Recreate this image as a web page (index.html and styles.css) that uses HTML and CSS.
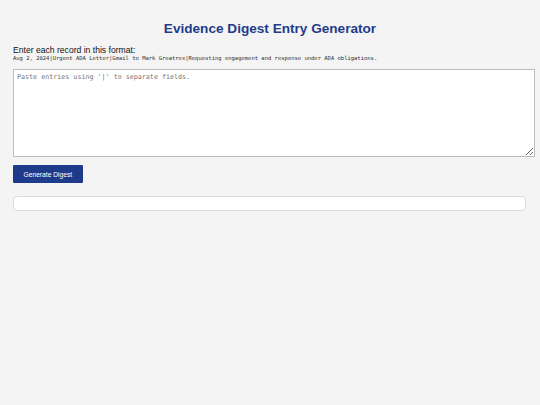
FILE: index.html
```html
<!DOCTYPE html>
<html lang="en">
<head>
<meta charset="utf-8">
<title>Evidence Digest Entry Generator</title>
<link rel="stylesheet" href="styles.css">
</head>
<body>
<h1 class="title">Evidence Digest Entry Generator</h1>
<div class="format">
  <div class="format-label">Enter each record in this format:</div>
  <code class="format-example">Aug 2, 2024|Urgent ADA Letter|Gmail to Mark Greatrex|Requesting engagement and response under ADA obligations.</code>
</div>
<textarea class="entries" placeholder="Paste entries using '|' to separate fields."></textarea>
<button class="generate" type="button">Generate Digest</button>
<div class="output"></div>
</body>
</html>
```

FILE: styles.css
```css
html, body {
  margin: 0;
  background: #f4f4f4;
}
body {
  padding: 13px;
  font-family: "Liberation Sans", Arial, sans-serif;
  color: #111;
}
.title {
  margin: 8px 0 8px;
  font-size: 13.6px;
  line-height: 16px;
  font-weight: bold;
  text-align: center;
  color: #1f3b8a;
}
.format-label {
  font-size: 8.6px;
  line-height: 10px;
  color: #111;
}
.format-example {
  display: block;
  font-family: "DejaVu Sans Mono", "Liberation Mono", monospace;
  font-size: 5.5px;
  line-height: 7px;
  color: #333;
}
.entries {
  display: block;
  box-sizing: content-box;
  width: 100%;
  height: 80px;
  margin: 7px 0 8px;
  padding: 3px;
  border: 1px solid #bdbdbd;
  background: #fff;
  font-family: "DejaVu Sans Mono", "Liberation Mono", monospace;
  font-size: 6.7px;
  line-height: 9px;
  resize: vertical;
  outline: none;
}
.entries::placeholder {
  color: #757575;
}
.generate {
  display: block;
  height: 18px;
  padding: 0 10.5px;
  border: none;
  border-radius: 1px;
  background: #1e3a8a;
  color: #fff;
  font-family: "Liberation Sans", Arial, sans-serif;
  font-size: 6.7px;
  cursor: pointer;
}
.output {
  margin-top: 13px;
  width: 511px;
  height: 13px;
  border: 1px solid #dcdcdc;
  border-radius: 4px;
  background: #fff;
}
```
